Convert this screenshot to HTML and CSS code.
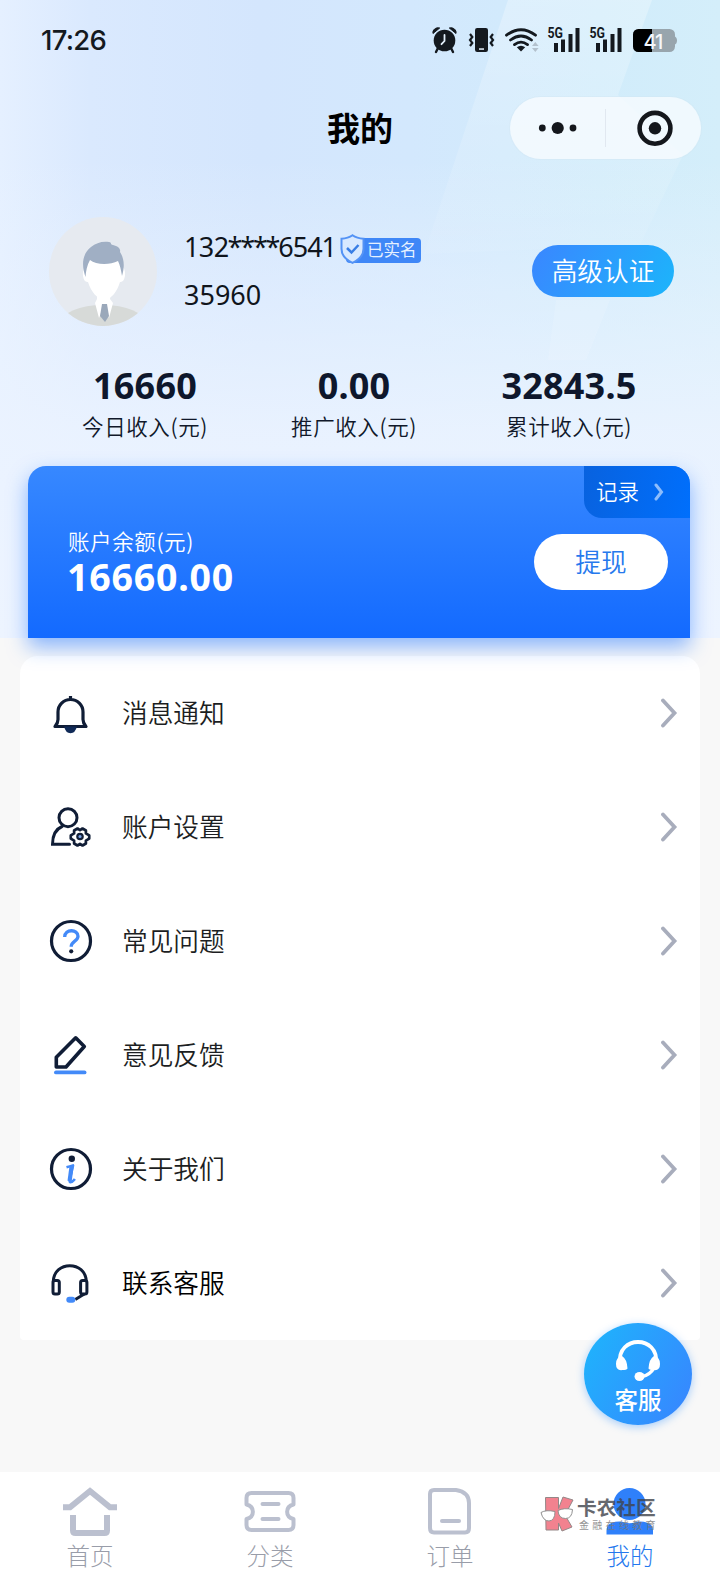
FILE: index.html
```html
<!DOCTYPE html>
<html lang="zh-CN">
<head>
<meta charset="utf-8">
<title>我的</title>
<link rel="stylesheet" href="styles.css">
</head>
<body>
<div class="page">
  <header class="hero">
    <svg class="hero-bands" viewBox="0 0 720 638" aria-hidden="true">
      <defs>
        <linearGradient id="band" x1="0" y1="0" x2="0" y2="1">
          <stop offset="0" stop-color="#fff" stop-opacity=".28"/>
          <stop offset="1" stop-color="#fff" stop-opacity="0.05"/>
        </linearGradient>
      </defs>
      <path d="M508 0H652L618 95L683 155L640 245L424 254Z" fill="url(#band)"/>
      <path d="M556 300L610 300L586 360H548Z" fill="#fff" opacity=".12"/>
    </svg>
    <div class="status">
      <span class="clock">17:26</span>
      <svg class="status-icons" width="250" height="30" viewBox="430 25 250 30">
        <g fill="#14191f">
          <circle cx="444.500" cy="40.500" r="10.800"/>
          <path d="M433 33.500c-.8-3.500 2.800-6.500 6.700-5.500zM456 33.500c.8-3.500-2.800-6.500-6.700-5.500z" stroke="#14191f" stroke-width="1"/>
          <path d="M438 48l-2 4M451 48l2 4" stroke="#14191f" stroke-width="2.400" stroke-linecap="round"/>
          <path d="M444.500 35v6l-3 3.200" fill="none" stroke="#e4f1fc" stroke-width="1.800" stroke-linecap="round"/>
          <rect x="475" y="28" width="13" height="24" rx="2.200"/>
          <rect x="479" y="48.300" width="5" height="1.500" fill="#e4f1fc"/>
          <path d="M470 34l2.300 3-2.300 3 2.300 3-2.300 3M493 34l-2.300 3 2.300 3-2.300 3 2.300 3" fill="none" stroke="#14191f" stroke-width="2.200"/>
          <g fill="none" stroke="#14191f" stroke-width="2.800" stroke-linecap="round">
            <path d="M506.500 35.200q14.500-11 29 0M510.500 40q10.500-8 21 0M514.500 44.600q6.500-5 13 0"/>
          </g>
          <path d="M521 51.500l-4.200-4.300q4.200-3 8.400 0z"/>
          <path d="M532 46l3.300-4 3.300 4zM532 48l3.300 4 3.300-4z" fill="#b3c1cd"/>
          <path d="M554 43h4v9h-4zM561 39.500h4V52h-4zM568.500 34h4v18h-4zM575.500 28h4v24h-4z"/>
          <path d="M596 43h4v9h-4zM603 39.500h4V52h-4zM610.500 34h4v18h-4zM617.500 28h4v24h-4z"/>
        </g>
        <text class="net" x="547.500" y="37.500" textLength="15.500" lengthAdjust="spacingAndGlyphs">5G</text>
        <text class="net" x="589.500" y="37.500" textLength="15.500" lengthAdjust="spacingAndGlyphs">5G</text>
        <rect x="633" y="29" width="42" height="23" rx="5.500" fill="#98a5ad"/>
        <path d="M674 36q3 1 3 4.500t-3 4.500z" fill="#98a5ad"/>
        <path d="M638.500 29H652v23h-13.500a5.500 5.500 0 0 1-5.500-5.500v-12a5.500 5.500 0 0 1 5.500-5.500z" fill="#000"/>
        <text class="battery" x="643.500" y="48.500">41</text>
      </svg>
    </div>
    <div class="navbar">
      <h1 class="title">我的</h1>
      <div class="capsule">
        <svg width="95" height="62" viewBox="0 0 95 62"><circle cx="32.300" cy="31" r="3.400"/><circle cx="47.700" cy="31" r="6.100"/><circle cx="63" cy="31" r="3.400"/></svg>
        <span class="capsule-line"></span>
        <svg width="95" height="62" viewBox="0 0 95 62"><circle cx="49" cy="31.300" r="15.400" fill="none" stroke="#14171c" stroke-width="4.600"/><circle cx="49" cy="31.300" r="6.200"/></svg>
      </div>
    </div>
    <section class="profile">
      <svg class="avatar" width="108" height="109" viewBox="0 0 108 109">
        <defs><clipPath id="face"><ellipse cx="54" cy="54.500" rx="54" ry="54.500"/></clipPath></defs>
        <g clip-path="url(#face)">
          <rect width="108" height="109" fill="#e6eaf0"/>
          <ellipse cx="54" cy="106" rx="42" ry="18" fill="#d7dad8"/>
          <path d="M48 74h14l-1 8 3 4-4 15-5-12-5 12-4-15 2-4z" fill="#fff"/>
          <path d="M53 87h5l2 12-4 6-5-6z" fill="#9aa8ba"/>
          <path d="M36 50c-4 5-2 16 3 15 3 10 9 16 16 19 8-3 13-9 16-19 5 1 7-10 3-15L70 40 40 42z" fill="#fff"/>
          <path d="M36.500 60C33 50 32 38 42 30c5-4 11-6 18-5 3 0 1 3 4 3 5 1 8 4 7 7 4 6 5 14 2 24-1-6-2-11-4-15-8 4-22 4-28-1-3 5-4 11-4.500 17z" fill="#a0afc4"/>
        </g>
      </svg>
      <div class="identity">
        <div class="phone-row">
          <span class="phone">132<span class="stars">****</span><span class="tail">6541</span></span>
          <span class="badge">
            <svg class="badge-shield" width="26" height="30" viewBox="0 0 26 30"><path d="M12.500 1.300c3 2.200 6.500 3.300 11 3.500v10c0 6.500-4.500 11-11 14-6.500-3-11-7.500-11-14v-10c4.500-.2 8-1.300 11-3.500z" fill="#d8e9ff" stroke="#5493f5" stroke-width="2"/><path d="M7 14l4.500 4.500L18.500 11" fill="none" stroke="#397ee5" stroke-width="2.500"/></svg>
            已实名
          </span>
        </div>
        <div class="uid">35960</div>
      </div>
      <button class="verify">高级认证</button>
    </section>
    <section class="stats">
      <div class="stat"><b>16660</b><span>今日收入(元)</span></div>
      <div class="stat"><b>0.00</b><span>推广收入(元)</span></div>
      <div class="stat"><b>32843.5</b><span>累计收入(元)</span></div>
    </section>
    <section class="wallet">
      <div class="balance"><span>账户余额(元)</span><b>16660.00</b></div>
      <div class="wallet-side">
        <a class="record">记录<svg width="10" height="18" viewBox="0 0 10 18"><path d="M2 2l5.500 7L2 16" fill="none" stroke="#8dbdfc" stroke-width="3" stroke-linecap="round"/></svg></a>
        <button class="withdraw">提现</button>
      </div>
    </section>
  </header>

  <main class="menu">
    <a class="item">
      <svg class="icon" viewBox="0.500 -1.500 44 44"><g fill="none" stroke="#101d36" stroke-width="3.200" stroke-linejoin="round"><path d="M22 3.500v4M9.500 27V19.500a12.500 12.500 0 0 1 25 0V27c0 3 .8 4.500 3 7h-31c2.200-2.500 3-4 3-7z"/></g><path d="M15.500 34h13q-1.800 6.800-6.500 6.800T15.500 34z" fill="#102a57"/></svg>
      <span>消息通知</span><svg class="chev" viewBox="0 0 18 30"><path d="M3 2.500L14.500 15 3 27.500"/></svg>
    </a>
    <a class="item">
      <svg class="icon" viewBox="1 -1 44 44"><g fill="none" stroke="#101d36" stroke-width="3" stroke-linecap="round"><circle cx="20" cy="11.700" r="9"/><path d="M14 20.500C7 23.500 4.500 29 4.500 38.300H21.500"/></g><path d="M29.500 22.500l2.500 1.600 2.500-1.600 3.400 2v2.900l3.300 2v3.200l-3.300 2v2.900l-3.400 2-2.500-1.600-2.500 1.600-3.400-2v-2.900l-3.300-2v-3.200l3.300-2v-2.900z" fill="#fff" stroke="#101d36" stroke-width="2.700" stroke-linejoin="round"/><circle cx="32" cy="30.500" r="2.700" fill="#7aa3e8" stroke="#101d36" stroke-width="2.200"/></svg>
      <span>账户设置</span><svg class="chev" viewBox="0 0 18 30"><path d="M3 2.500L14.500 15 3 27.500"/></svg>
    </a>
    <a class="item">
      <svg class="icon" viewBox="0 0 44 44"><circle cx="22" cy="22" r="19.500" fill="none" stroke="#101d36" stroke-width="3.200"/><path d="M15.700 18c0-8.200 13.300-8.200 13.300-.8 0 5-6.800 4.800-6.800 10.500" fill="none" stroke="#438af8" stroke-width="3.300"/><circle cx="22.200" cy="32.300" r="2.100" fill="#101d36"/></svg>
      <span>常见问题</span><svg class="chev" viewBox="0 0 18 30"><path d="M3 2.500L14.500 15 3 27.500"/></svg>
    </a>
    <a class="item">
      <svg class="icon" viewBox="0 0 44 44"><path d="M26.700 4.800L35.300 13.500 17 34H7.300v-9.800z" fill="none" stroke="#101d36" stroke-width="3.600" stroke-linejoin="round"/><path d="M7 39.400h28.500" stroke="#438af8" stroke-width="3.900" stroke-linecap="round"/></svg>
      <span>意见反馈</span><svg class="chev" viewBox="0 0 18 30"><path d="M3 2.500L14.500 15 3 27.500"/></svg>
    </a>
    <a class="item">
      <svg class="icon" viewBox="0 0 44 44"><circle cx="22" cy="22" r="19.500" fill="none" stroke="#101d36" stroke-width="3.200"/><circle cx="22.800" cy="11.800" r="3.200" fill="#101d36"/><path d="M17.500 20.200q3-.8 6.500-1.700-2.800 11.500-3.300 15-.2 2.300 2.200 1.200 1.500-.8 3-2.700" fill="none" stroke="#438af8" stroke-width="2.700" stroke-linejoin="round"/><path d="M22.500 20l-1.900 14" stroke="#438af8" stroke-width="4.200"/></svg>
      <span>关于我们</span><svg class="chev" viewBox="0 0 18 30"><path d="M3 2.500L14.500 15 3 27.500"/></svg>
    </a>
    <a class="item">
      <svg class="icon" viewBox=".700 -.5 44 44"><g fill="none" stroke="#101d36" stroke-width="3"><path d="M5 20C5.500-1 37.500-1 38 20"/><rect x="4.700" y="19" width="6.300" height="13.500" rx="2"/><rect x="32.300" y="19" width="6.300" height="13.500" rx="2"/><path d="M36 32.500l-9 5.500"/></g><rect x="18" y="35.300" width="9" height="6" rx="3" fill="#438af8"/></svg>
      <span class="strong">联系客服</span><svg class="chev" viewBox="0 0 18 30"><path d="M3 2.500L14.500 15 3 27.500"/></svg>
    </a>
  </main>

  <nav class="tabs">
    <a class="tab"><svg width="58" height="52" viewBox="0 0 58 52"><path d="M2 22.300h7L29 6l20 16.300h7" fill="none" stroke="#bbc0cf" stroke-width="6"/><path d="M12 30v15.500q0 2.500 2.500 2.500h29q2.500 0 2.500-2.500V30" fill="none" stroke="#bbc0cf" stroke-width="6"/></svg><span>首页</span></a>
    <a class="tab"><svg width="58" height="52" viewBox="0 0 58 52"><g fill="none" stroke="#bbc0cf" stroke-width="4"><path d="M10.500 8h37q5 0 5 5v6.500c-8.500 2-8.500 12.500 0 14.500v6q0 5-5 5h-37q-5 0-5-5v-6c8.500-2 8.500-12.500 0-14.500V13q0-5 5-5z" stroke-linejoin="round"/><path d="M21.500 19h16M21.500 34h16" stroke-linecap="round"/></g></svg><span>分类</span></a>
    <a class="tab"><svg width="58" height="52" viewBox="0 0 58 52"><g fill="none" stroke="#bbc0cf" stroke-width="4"><path d="M13 5h22q13 2 13 13v25q0 4.500-4 4.500H13q-4 0-4-4.500V9q0-4 4-4z"/><path d="M21 36h17" stroke-linecap="round"/></g></svg><span>订单</span></a>
    <a class="tab active"><svg width="58" height="52" viewBox="0 0 58 52"><circle cx="28.500" cy="19" r="16" fill="#2f80fa"/><path d="M5.500 49.500v-4q0-9 13-9q3 0 5 1 5 1.500 10 0 2-1 5-1 13.500 0 13.500 9v4z" fill="#2f80fa"/></svg><span>我的</span></a>
  </nav>

  <div class="service">
    <svg width="46" height="44" viewBox="0 0 46 44"><path d="M5 24C2-4 44-4 41 24" fill="none" stroke="#fff" stroke-width="3.800"/><path d="M7 17q-6 1-6 8t6.500 6q4 0 5-1.500Q12 20 7 17zM39 17q6 1 6 8t-6.500 6q-4 0-5-1.500Q34 20 39 17z" fill="#fff"/><path d="M39 29q-4 7-12 8.500" fill="none" stroke="#fff" stroke-width="3.500"/><ellipse cx="24.500" cy="37.500" rx="5" ry="4.600" fill="#fff"/></svg>
    <span>客服</span>
  </div>

  <div class="mark">
    <svg width="34" height="36" viewBox="0 0 34 36"><path d="M5.500 1.500h13v11L23 1l10 3-8 15 7 12-10 4-3.500-8v7H6z" fill="#f06474" stroke="#7a6a6a"/><path d="M1 16.500q5-3 14-1 0 9-6 9.500Q3 25 1 16.500zM18 14.500q6-3 14.500-1-.5 9-7 9-7 0-7.500-8z" fill="#fff" stroke="#777"/></svg>
    <div class="mark-text"><b>卡农社区</b><small>金融在线教育</small></div>
  </div>
</div>
</body>
</html>
```
FILE: styles.css
```css
* { box-sizing: border-box; }
body {
  margin: 0;
  background: #f8f8f8;
  color: #1c1e22;
  font-family: "Noto Sans", "Noto Sans CJK SC", sans-serif;
  font-weight: 350;
}
h1, button { margin: 0; border: 0; padding: 0; font: inherit; }
svg { display: block; flex: none; }

.page {
  position: relative;
  width: 720px;
  height: 1584px;
  overflow: hidden;
  display: flex;
  flex-direction: column;
}

.hero {
  position: relative;
  z-index: 1;
  height: 638px;
  display: flex;
  flex-direction: column;
  background:
    linear-gradient(180deg, rgba(236,244,255,0) 25%, rgba(235,243,255,.9) 68%, #edf4ff 100%),
    linear-gradient(90deg, #e5f0ff 0, #dae9fe 90px, #d4e6fd 260px, #d3e8fd 410px, #d1ecfb 600px, #d4eefa 720px);
}
.hero-bands { position: absolute; left: 0; top: 0; width: 720px; height: 638px; }

.status {
  position: relative;
  height: 80px;
  padding: 0 40px 0 41px;
  display: flex;
  align-items: center;
  justify-content: space-between;
}
.clock { font: 500 27.500px/80px Inter, sans-serif; letter-spacing: -.75px; color: #14191f; }
.net { font: 700 14px Roboto, sans-serif; fill: #14191f; }
.battery { font: 500 20px Inter, sans-serif; fill: #f4f7fa; letter-spacing: -1px; }

.navbar { position: relative; height: 97px; display: flex; padding: 17px 19px 0 210px; justify-content: space-between; }
.title { width: 300px; height: 62px; text-align: center; font-size: 33px; line-height: 63px; font-weight: 700; color: #000; }
.capsule {
  width: 191px;
  height: 62px;
  border-radius: 31px;
  background: rgba(250,252,255,.75);
  box-shadow: 0 0 0 1px rgba(210,228,240,.35);
  display: flex;
  align-items: center;
  fill: #14171c;
}
.capsule-line { width: 1px; height: 38px; background: #e1e8f0; }

.profile { position: relative; height: 189px; padding: 40px 46px 0 49px; display: flex; align-items: flex-start; }
.identity { margin: 10px 0 0 27px; width: 348px; }
.phone, .uid { font-size: 27px; line-height: 40px; font-weight: 400; color: #10151c; }
.phone { width: 149px; white-space: nowrap; letter-spacing: -.6px; }
.uid { margin-top: 8px; }
.stars { letter-spacing: -2.200px; margin: 0 0 0 -1px; }
.tail { letter-spacing: -1px; }
.phone-row { display: flex; align-items: center; gap: 13px; }
.badge {
  position: relative;
  width: 75px;
  height: 25px;
  margin: 6px 0 0;
  padding-left: 21px;
  border-radius: 4px;
  background: #3f87f7;
  color: #e6f1ff;
  font-size: 16.500px;
  line-height: 24px;
  font-weight: 400;
  white-space: nowrap;
}
.badge-shield { position: absolute; left: -6px; top: -4px; }
.verify {
  width: 142px;
  height: 52px;
  margin-top: 28px;
  border-radius: 26px;
  background: linear-gradient(120deg, #3a86ff, #1cb5fb);
  color: #fff;
  font-size: 25.700px;
  line-height: 51px;
}

.stats { position: relative; display: grid; grid-template-columns: 210px 208px 222px; padding-left: 40px; height: 100px; }
.stat { display: flex; flex-direction: column; align-items: center; }
.stat b { font-size: 36px; line-height: 40px; font-weight: 700; color: #0e172c; letter-spacing: .2px; }
.stat span { font-family: "Noto Sans CJK SC", sans-serif; font-size: 21.500px; letter-spacing: .6px; line-height: 30px; margin-top: 5px; color: #10182a; }

.wallet {
  position: relative;
  margin: 0 30px 0 28px;
  height: 172px;
  border-radius: 18px 18px 0 0;
  background: linear-gradient(180deg, #3788ff, #136aff);
  box-shadow: 0 9px 20px rgba(30,115,255,.5);
  color: #fff;
  display: flex;
  justify-content: space-between;
}
.balance { padding: 59px 0 0 40px; display: flex; flex-direction: column; }
.balance span { font-family: "Noto Sans CJK SC", sans-serif; font-size: 21.500px; letter-spacing: .6px; line-height: 32px; }
.balance b { font-size: 37.500px; line-height: 40px; font-weight: 700; letter-spacing: .8px; margin-left: -1px; }
.wallet-side { display: flex; flex-direction: column; align-items: flex-end; }
.record {
  width: 106px;
  height: 52px;
  padding-left: 12px;
  border-radius: 0 18px 0 18px;
  background: linear-gradient(100deg, #0862df, #006ffc);
  font-size: 21.500px;
  line-height: 52px;
  display: flex;
  align-items: center;
  gap: 15px;
}
.withdraw { width: 134px; height: 56px; margin: 16px 22px 0 0; border-radius: 28px; background: #fff; color: #2679ed; font-size: 25.700px; line-height: 55px; }

.menu { width: 680px; margin: 18px auto 0 20px; border-radius: 18px 18px 4px 4px; background: #fff; }
.item { height: 114px; padding: 0 22px 0 29px; display: flex; align-items: center; font-size: 25.700px; }
.item span { flex: 1; margin-left: 29px; padding-top: 2px; line-height: 38px; }
.item .strong { color: #000; }
.icon { width: 44px; height: 44px; }
.chev { width: 18px; height: 30px; fill: none; stroke: #a8adbc; stroke-width: 3.800; stroke-linecap: round; }

.tabs { margin-top: auto; height: 112px; background: #fff; display: grid; grid-template-columns: repeat(4, 1fr); }
.tab { padding-top: 13px; display: flex; flex-direction: column; align-items: center; color: #999da9; font-size: 23.500px; line-height: 34px; }
.tab span { margin-top: 2px; font-weight: 300; }
.active { color: #2478ee; }

.service {
  position: absolute;
  z-index: 2;
  left: 584px;
  top: 1323px;
  width: 108px;
  height: 102px;
  border-radius: 50%;
  background: linear-gradient(120deg, #1db6fc, #3983ff);
  box-shadow: 0 2px 8px rgba(40,140,255,.4);
  color: #fff;
  display: flex;
  flex-direction: column;
  align-items: center;
  padding-top: 16px;
  font-size: 23.500px;
  line-height: 30px;
  font-weight: 500;
}
.service span { margin-top: 2px; }

.mark { position: absolute; left: 540px; top: 1496px; display: flex; gap: 3px; opacity: .8; }
.mark-text { display: flex; flex-direction: column; color: #3f434b; white-space: nowrap; padding-top: 1px; }
.mark-text b { font-size: 19.700px; line-height: 22px; font-weight: 700; }
.mark-text small { font-size: 10px; line-height: 12px; font-weight: 400; letter-spacing: 3.300px; margin-left: 2px; color: #777; }
```
